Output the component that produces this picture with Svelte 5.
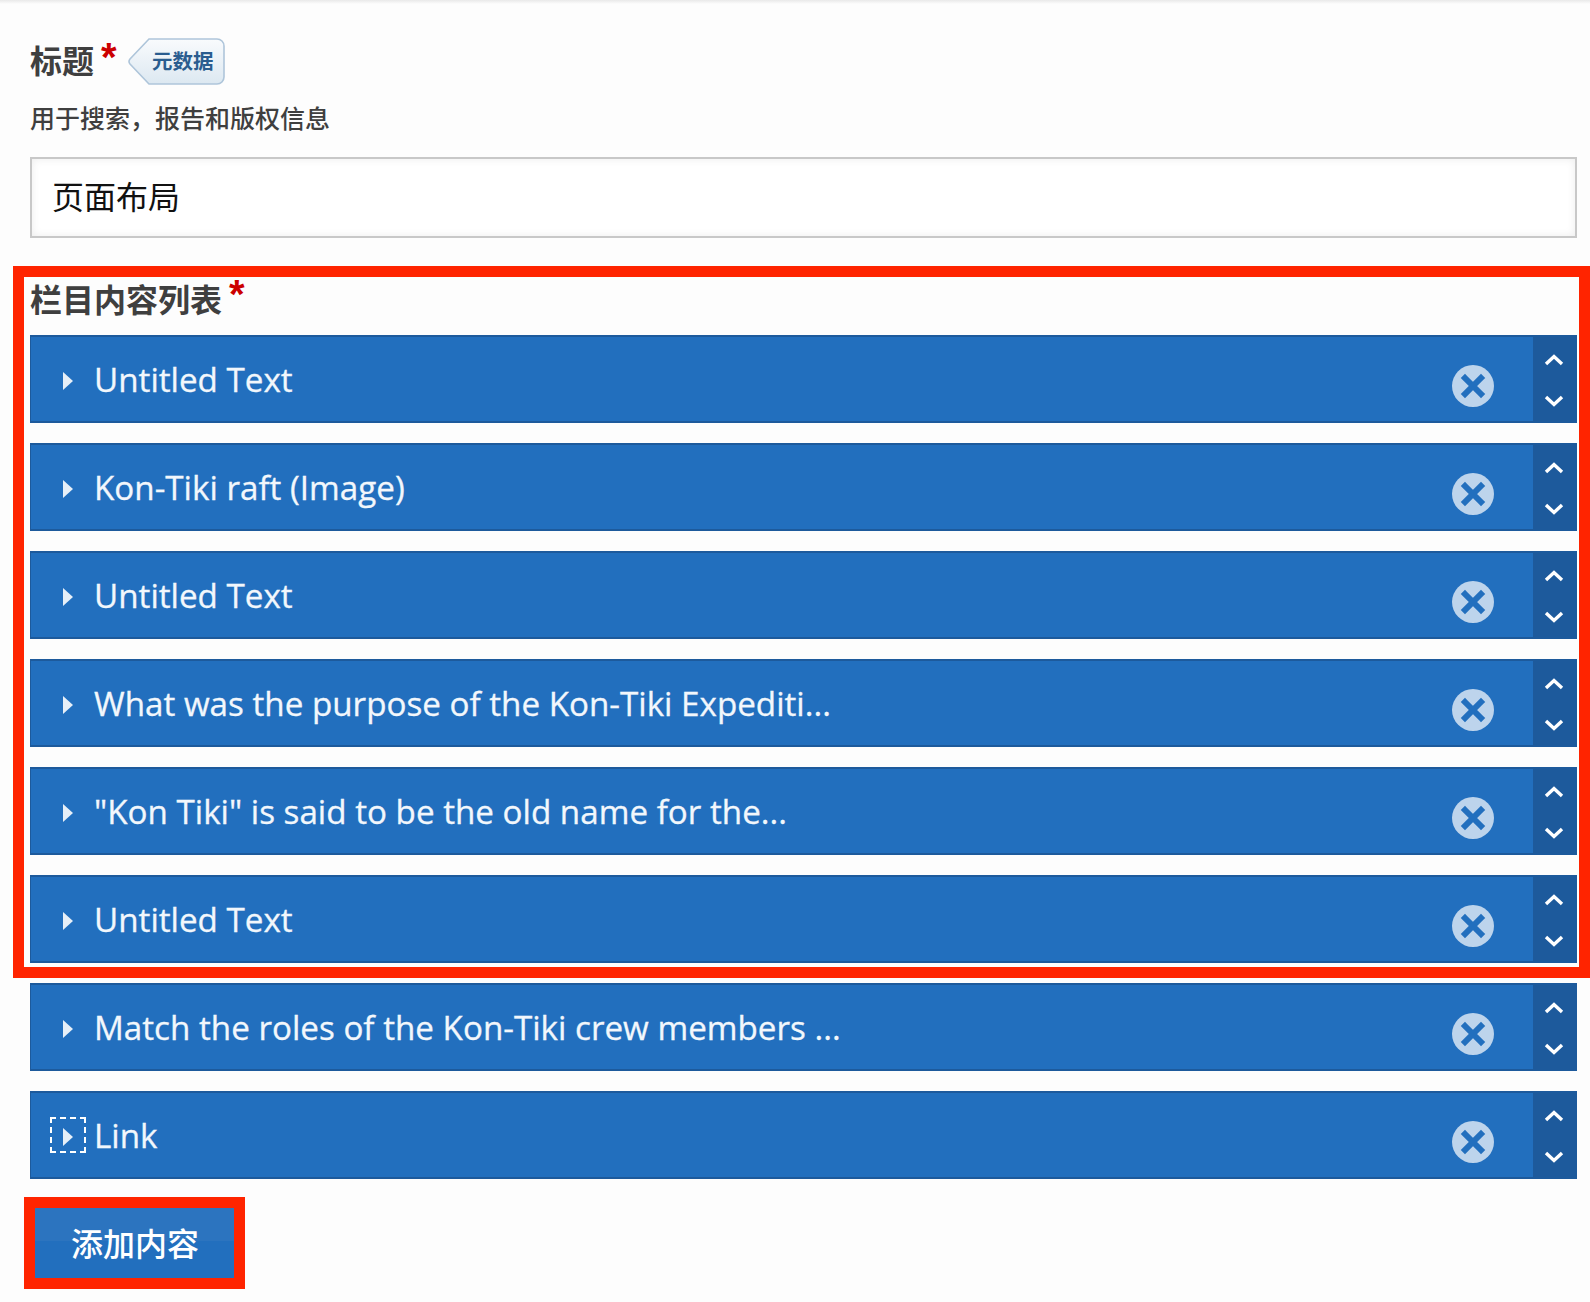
<script>
	const items = [
		'Untitled Text',
		'Kon-Tiki raft (Image)',
		'Untitled Text',
		'What was the purpose of the Kon-Tiki Expediti...',
		'"Kon Tiki" is said to be the old name for the...',
		'Untitled Text',
		'Match the roles of the Kon-Tiki crew members ...',
		'Link'
	];
</script>

<div class="page">
	<div class="field meta">
		<div class="label-row">
			<span class="label">标题</span>
			<span class="req">*</span>
			<svg class="tag" width="97" height="47" viewBox="0 0 97 47" aria-hidden="true">
				<defs>
					<linearGradient id="tagfill" x1="0" y1="0" x2="0" y2="1">
						<stop offset="0" stop-color="#f9fbfd" />
						<stop offset="1" stop-color="#dce8f1" />
					</linearGradient>
				</defs>
				<path
					d="M21 1H89a7 7 0 0 1 7 7V39a7 7 0 0 1-7 7H21L2 26a4 4 0 0 1 0-5Z"
					fill="url(#tagfill)"
					stroke="#aec5da"
					stroke-width="1.6"
				/>
				<text x="24" y="31" class="tag-text">元数据</text>
			</svg>
		</div>
		<div class="desc">用于搜索，报告和版权信息</div>
		<div class="input">页面布局</div>
	</div>

	<div class="list-title">
		<span class="label">栏目内容列表</span>
		<span class="req">*</span>
	</div>

	<ul class="list">
		{#each items as item, i}
			<li class="row">
				<div class="main">
					<span class="arrow" class:focus={i === items.length - 1}>
						<svg width="10" height="18" viewBox="0 0 10 18" aria-hidden="true">
							<path d="M0 0L10 9L0 18Z" fill="#e6eff8" />
						</svg>
					</span>
					<span class="name">{item}</span>
					<svg class="remove" width="42" height="42" viewBox="0 0 42 42" aria-hidden="true">
						<circle cx="21" cy="21" r="21" fill="#bdd4ec" />
						<path d="M13 13L29 29M29 13L13 29" stroke="#226fbe" stroke-width="6" stroke-linecap="square" />
					</svg>
				</div>
				<div class="order">
					<svg width="20" height="12" viewBox="0 0 20 12" aria-hidden="true">
						<path d="M2 10L10 2.500L18 10" fill="none" stroke="#fff" stroke-width="3.400" />
					</svg>
					<svg width="20" height="12" viewBox="0 0 20 12" aria-hidden="true">
						<path d="M2 2L10 9.500L18 2" fill="none" stroke="#fff" stroke-width="3.400" />
					</svg>
				</div>
			</li>
		{/each}
	</ul>

	<button class="add" type="button">添加内容</button>

	<div class="mark list-mark"></div>
	<div class="mark add-mark"></div>
</div>

<style>
	:global(body) {
		margin: 0;
		background: #fdfdfd;
	}

	.page {
		position: relative;
		box-sizing: border-box;
		width: 1590px;
		height: 1302px;
		padding: 0 13px 0 30px;
		background: linear-gradient(#e9e9e9, #fdfdfd 4px);
		font-family: 'Noto Sans CJK SC', 'Noto Sans', sans-serif;
		color: #3f3f3f;
		overflow: hidden;
	}

	.meta {
		padding-top: 38px;
	}

	.label-row {
		display: flex;
		align-items: flex-start;
		height: 47px;
	}

	.label {
		margin-top: -2px;
		font-size: 32px;
		font-weight: 700;
		line-height: 47px;
	}

	.req {
		margin-top: -1px;
		margin-left: 7px;
		font-family: 'Liberation Sans', sans-serif;
		font-size: 40px;
		font-weight: 700;
		line-height: 40px;
		color: #cc0000;
	}

	.tag {
		margin-left: 11px;
	}

	.tag-text {
		font-size: 20.500px;
		font-weight: 700;
		fill: #2a5d8f;
	}

	.desc {
		margin-top: 15px;
		font-size: 25px;
		font-weight: 500;
		line-height: 34px;
	}

	.input {
		box-sizing: border-box;
		height: 81px;
		margin-top: 23px;
		padding-left: 20px;
		border: 2px solid #c8c8c8;
		background: #fff;
		box-shadow: inset 0 0 8px rgba(0, 0, 0, 0.08);
		font-size: 32px;
		line-height: 73px;
		color: #111;
	}

	.list-title {
		display: flex;
		align-items: flex-start;
		height: 47px;
		margin-top: 37px;
	}

	.list-title .label {
		margin-top: 0;
	}

	.list {
		list-style: none;
		margin: 13px 0 0;
		padding: 0;
	}

	.row {
		display: flex;
		box-sizing: border-box;
		height: 88px;
		margin-bottom: 20px;
		border-top: 2px solid #1d5a9c;
		border-bottom: 2px solid #1d5a9c;
		border-left: 1px solid #1d5a9c;
		background: #226fbe;
	}

	.main {
		display: flex;
		flex: 1;
		align-items: center;
		min-width: 0;
		padding: 0 39px 0 19px;
	}

	.arrow {
		display: flex;
		flex: none;
		align-items: center;
		justify-content: center;
		box-sizing: border-box;
		width: 36px;
		height: 36px;
		margin-right: 8px;
		border: 2px dashed transparent;
	}

	.arrow svg {
		margin-top: 3px;
	}

	.arrow.focus {
		border-color: #fff;
	}

	.name {
		flex: 1;
		margin-top: 1px;
		font-family: 'Open Sans', 'Noto Sans', sans-serif;
		font-size: 33.200px;
		-webkit-text-stroke: 0.3px #f2f7fc;
		color: #f2f7fc;
		white-space: nowrap;
	}

	.remove {
		flex: none;
		margin-top: 14px;
	}

	.order {
		display: flex;
		flex: none;
		flex-direction: column;
		align-items: center;
		justify-content: space-between;
		box-sizing: border-box;
		width: 44px;
		padding: 17px 2px 14px 0;
		background: #1d5a9c;
	}

	.add {
		display: block;
		width: 200px;
		height: 71px;
		margin: 28px 0 0 5px;
		border: none;
		padding: 0 0 2px;
		background: linear-gradient(#2c74bf 0 48%, #226fbe 48%);
		font-family: inherit;
		font-size: 32px;
		font-weight: 500;
		color: #fff;
	}

	.mark {
		position: absolute;
		box-sizing: border-box;
		border: 11px solid #ff2400;
	}

	.list-mark {
		top: 266px;
		left: 13px;
		width: 1577px;
		height: 712px;
	}

	.add-mark {
		top: 1197px;
		left: 24px;
		width: 221px;
		height: 92px;
	}
</style>
